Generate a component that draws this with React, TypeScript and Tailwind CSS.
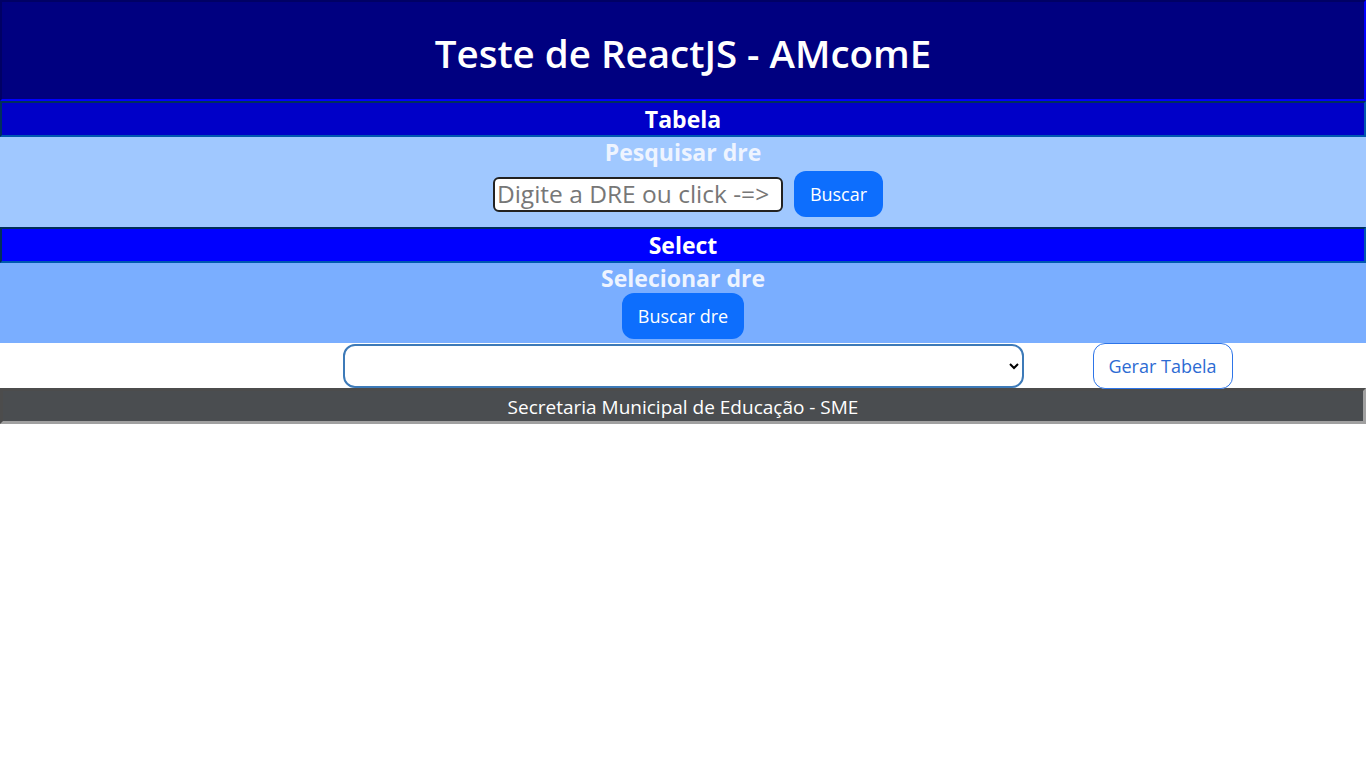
const font = { fontFamily: '"Open Sans", "Noto Sans", sans-serif' };

const SectionBar = ({ label, bg }: { label: string; bg: string }) => (
  <div
    className={`${bg} h-[36px] border-2 [border-style:inset] border-[#0058b0] flex items-center justify-center`}
  >
    <h4 className="text-white font-bold text-[23px] leading-none">{label}</h4>
  </div>
);

export default function App() {
  return (
    <div className="min-h-screen bg-white" style={font}>
      <header className="h-[101px] bg-[#000080] border-2 [border-style:inset] border-[#0000b8] flex items-center justify-center">
        <h1 className="text-white font-semibold text-[38.5px] leading-none pt-[6px]">
          Teste de ReactJS - AMcomE
        </h1>
      </header>

      <SectionBar label="Tabela" bg="bg-[#0000c8]" />

      <section className="h-[90px] bg-[#a0c8ff] flex flex-col items-center">
        <h4 className="text-[#eef4ff] font-bold text-[23px] leading-[30px]">Pesquisar dre</h4>
        <div className="flex items-center gap-[11px] mt-[4px] ml-[10px]">
          <input
            placeholder="Digite a DRE ou click -=>"
            className="w-[290px] h-[35px] bg-white border-2 border-[#222] rounded-md px-[2px] text-[24.5px] placeholder:text-[#777] outline-none"
          />
          <button className="h-[46px] px-4 rounded-xl bg-[#0d6efd] text-white text-[18px]">
            Buscar
          </button>
        </div>
      </section>

      <SectionBar label="Select" bg="bg-[#0000ff]" />

      <section className="h-[80px] bg-[#7aaeff] flex flex-col items-center">
        <h4 className="text-[#eef4ff] font-bold text-[23px] leading-[30px]">Selecionar dre</h4>
        <button className="h-[46px] px-4 rounded-xl bg-[#0d6efd] text-white text-[18px]">
          Buscar dre
        </button>
      </section>

      <div className="h-[46px] grid grid-cols-[1fr_auto_1fr] items-center">
        <div />
        <select className="w-[681px] h-[44px] border-2 border-[#3d7ab8] rounded-xl bg-white px-3 text-[18px]">
          <option></option>
        </select>
        <div className="flex items-center">
          <button className="ml-[69px] h-[46px] w-[140px] border border-[#2e75e8] rounded-xl bg-white text-[#2d6bd3] text-[18px]">
            Gerar Tabela
          </button>
        </div>
      </div>

      <footer className="h-[36px] -mt-px pt-[2px] bg-[#4a4d50] border-[3px] [border-style:inset] border-[#a0a0a0] flex items-center justify-center">
        <span className="text-white text-[19px]">Secretaria Municipal de Educação - SME</span>
      </footer>
    </div>
  );
}
